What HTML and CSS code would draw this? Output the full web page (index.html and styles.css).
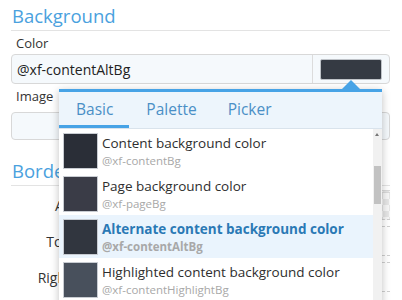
FILE: index.html
```html
<!DOCTYPE html>
<html lang="en">
<head>
  <meta charset="UTF-8">
  <title>Style properties</title>
  <link rel="stylesheet" href="styles.css">
</head>
<body>
<div class="page">
  <h2 class="block-title">Background</h2>
  <div class="field">
    <div class="field-label">Color</div>
    <div class="color-input">
      <span class="color-text">@xf-contentAltBg</span>
      <span class="color-box"><span class="color-swatch"></span></span>
    </div>
  </div>
  <div class="field">
    <div class="field-label">Image</div>
    <div class="text-input"></div>
  </div>

  <h2 class="block-title block-title--second">Border</h2>
  <div class="edge-rows">
    <div class="edge-row"><span class="edge-label">All</span><span class="edge-ctrl edge-ctrl--checker"></span></div>
    <div class="edge-row"><span class="edge-label">Top</span><span class="edge-ctrl"></span></div>
    <div class="edge-row"><span class="edge-label">Right</span><span class="edge-ctrl"></span></div>
  </div>

  <!-- color picker menu, opened over the form -->
  <div class="menu">
    <span class="menu-arrow"></span>
    <div class="menu-tabs">
      <span class="menu-tab is-active">Basic</span>
      <span class="menu-tab">Palette</span>
      <span class="menu-tab">Picker</span>
    </div>
    <div class="menu-body">
      <ul class="menu-list">
        <li class="menu-item">
          <span class="item-swatch" style="background:#2a2e37"></span>
          <span class="item-text"><b>Content background color</b><i>@xf-contentBg</i></span>
        </li>
        <li class="menu-item">
          <span class="item-swatch" style="background:#3a3c47"></span>
          <span class="item-text"><b>Page background color</b><i>@xf-pageBg</i></span>
        </li>
        <li class="menu-item is-selected">
          <span class="item-swatch" style="background:#31363f"></span>
          <span class="item-text"><b>Alternate content background color</b><i>@xf-contentAltBg</i></span>
        </li>
        <li class="menu-item">
          <span class="item-swatch" style="background:#48505c"></span>
          <span class="item-text"><b>Highlighted content background color</b><i>@xf-contentHighlightBg</i></span>
        </li>
      </ul>
      <div class="scrollbar">
        <span class="scroll-up"></span>
        <span class="scroll-thumb"></span>
      </div>
    </div>
  </div>
</div>
</body>
</html>
```

FILE: styles.css
```css
* {
  margin: 0;
  padding: 0;
  box-sizing: border-box;
  list-style: none;
}

body {
  background: #fff;
  font-family: "Open Sans", "Noto Sans", sans-serif;
  color: #2e2e2e;
  overflow: hidden;
}

.page {
  position: relative;
  width: 402px;
  height: 300px;
  padding: 2px 12px 0 11px;
}

.block-title {
  font-weight: 400;
  font-size: 18.5px;
  line-height: 27px;
  color: #4aa1de;
  padding-left: 1px;
  border-bottom: 1px solid #e3e3e3;
  padding-bottom: 1px;
}

.block-title--second {
  margin-top: 17px;
}

.field-label {
  font-size: 13px;
  line-height: 20px;
  padding: 2px 0 0 5px;
  color: #333;
}

.color-input {
  margin-top: 1px;
  height: 30px;
  border: 1px solid #d8d8d8;
  border-radius: 4px;
  background: #f5f9fc;
  display: flex;
  align-items: center;
}

.color-text {
  flex: 1;
  font-size: 14px;
  padding-left: 5px;
  color: #222;
}

.color-box {
  width: 77px;
  height: 100%;
  border-left: 1px solid #dcdcdc;
  display: flex;
  align-items: center;
  padding-left: 7px;
}

.color-swatch {
  width: 62px;
  height: 21px;
  background: #353a43;
  border: 1px solid #bfc3c8;
  border-radius: 2px;
}

.text-input {
  margin-top: 6px;
  height: 28px;
  border: 1px solid #d8d8d8;
  border-radius: 4px;
  background: #f5f9fc;
}

.edge-rows {
  padding-top: 1px;
}

.edge-row {
  display: flex;
  align-items: center;
  height: 36px;
}

.edge-label {
  width: 64px;
  text-align: right;
  font-size: 14px;
  padding-right: 4px;
  color: #333;
  flex-shrink: 0;
}

.edge-ctrl {
  flex: 1;
  height: 30px;
  margin-left: 20px;
  border-top: 1px dashed #cfcfcf;
  border-bottom: 1px dashed #cfcfcf;
}

.edge-ctrl--checker {
  border-top: 3px double #dadada;
  background: repeating-conic-gradient(#e6e6e6 0 25%, #f7f7f7 0 50%) 0 0 / 12px 12px;
}

/* menu */
.menu {
  position: absolute;
  left: 59px;
  top: 89px;
  width: 323px;
  height: 220px;
  background: #fff;
  border-top: 3px solid #47a3e6;
  box-shadow: 0 2px 8px rgba(0, 0, 0, 0.25);
}

.menu-arrow {
  position: absolute;
  left: 283px;
  top: -12px;
  width: 0;
  height: 0;
  border-left: 9px solid transparent;
  border-right: 9px solid transparent;
  border-bottom: 9px solid #47a3e6;
}

.menu-tabs {
  display: flex;
  background: #edf5fc;
  border-bottom: 1px solid #d9e3ec;
  height: 37px;
}

.menu-tab {
  font-size: 15.5px;
  line-height: 34px;
  color: #4a8fc6;
  padding: 0 16px 0 17px;
  border-bottom: 3px solid transparent;
}

.menu-tab.is-active {
  border-bottom-color: #47a3e6;
}

.menu-tab:nth-child(3) {
  padding-left: 15px;
}

.menu-body {
  display: flex;
}

.menu-list {
  flex: 1;
}

.menu-item {
  display: flex;
  align-items: center;
  height: 43px;
  padding-left: 4px;
}

.menu-item.is-selected {
  background: #eaf4fd;
}

.item-swatch {
  width: 35px;
  height: 36px;
  border: 1px solid #c8ccd2;
  flex-shrink: 0;
}

.item-text {
  padding-left: 4px;
  display: flex;
  flex-direction: column;
  white-space: nowrap;
}

.item-text b {
  font-weight: 400;
  font-size: 13.5px;
  line-height: 19px;
  color: #2e2e2e;
}

.item-text i {
  font-style: normal;
  font-size: 11.5px;
  line-height: 15px;
  color: #a8a8a8;
}

.is-selected .item-text b {
  font-weight: 700;
  color: #2a79b5;
}

.is-selected .item-text i {
  font-weight: 700;
}

.scrollbar {
  width: 9px;
  height: 180px;
  background: #f1f1f1;
  position: relative;
}

.scroll-up {
  position: absolute;
  left: 2px;
  top: 4px;
  border-left: 2.5px solid transparent;
  border-right: 2.5px solid transparent;
  border-bottom: 3px solid #777;
}

.scroll-thumb {
  position: absolute;
  left: 1px;
  top: 37px;
  width: 7px;
  height: 38px;
  background: #c2c2c2;
}
```
